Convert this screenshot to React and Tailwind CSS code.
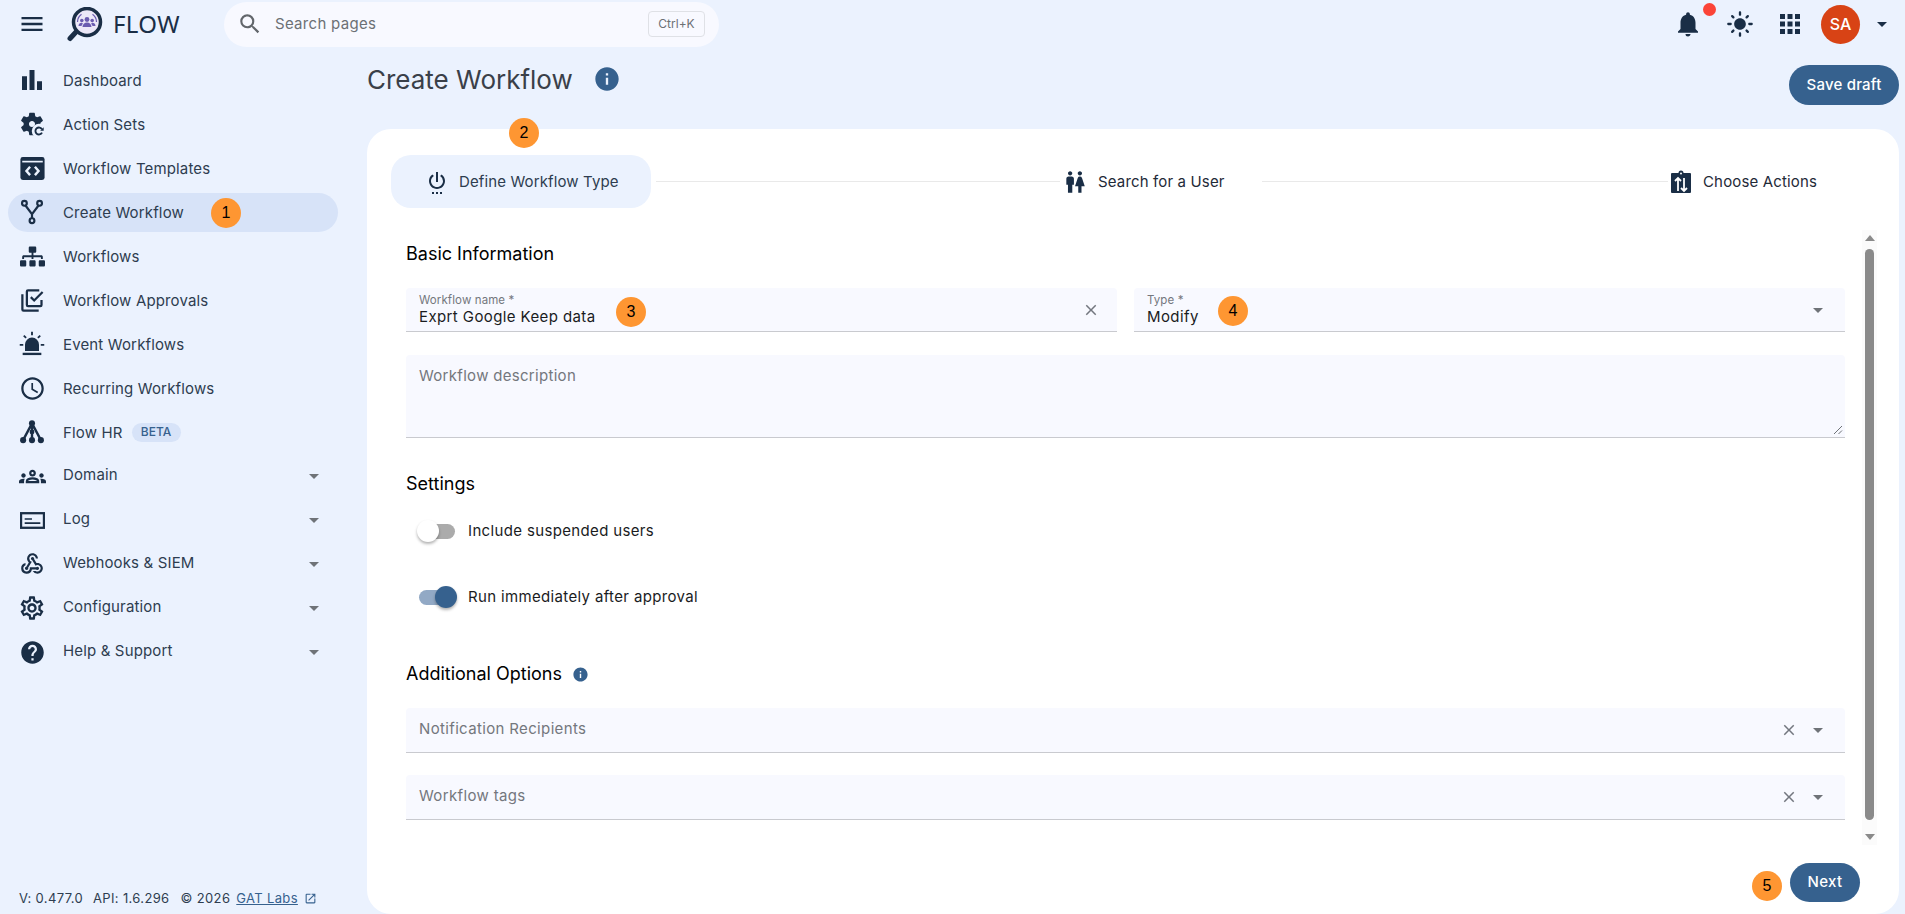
import React from "react";
import {
  MdMenu,
  MdSearch,
  MdNotifications,
  MdLightMode,
  MdApps,
  MdInfo,
  MdArrowDropDown,
  MdOutlineSchedule,
  MdOutlineGroups,
  MdWebhook,
  MdOutlineSettings,
  MdHelp,
  MdSettingsPower,
  MdWc,
  MdClose,
  MdOpenInNew,
} from "react-icons/md";
import { FaSitemap } from "react-icons/fa";

const navy = "#1a2e46";

function BarsIcon() {
  return (
    <svg viewBox="0 0 24 24" width="30" height="30" fill={navy}>
      <path d="M4 9h4v11H4zm12 4h4v7h-4zm-6-9h4v16h-4z" />
    </svg>
  );
}

function ActionSetsIcon() {
  return (
    <svg viewBox="0 0 24 24" width="28" height="28" fill={navy}>
      <path d="M19.14 12.94c.04-.3.06-.61.06-.94 0-.32-.02-.64-.07-.94l2.03-1.58c.18-.14.23-.41.12-.61l-1.92-3.32c-.12-.22-.37-.29-.59-.22l-2.39.96c-.5-.38-1.03-.7-1.62-.94l-.36-2.54c-.04-.24-.24-.41-.48-.41h-3.84c-.24 0-.43.17-.47.41l-.36 2.54c-.59.24-1.13.57-1.62.94l-2.39-.96c-.22-.08-.47 0-.59.22L2.74 8.87c-.12.21-.08.47.12.61l2.03 1.58c-.05.3-.09.63-.09.94s.02.64.07.94l-2.03 1.58c-.18.14-.23.41-.12.61l1.92 3.32c.12.22.37.29.59.22l2.39-.96c.5.38 1.03.7 1.62.94l.36 2.54c.05.24.24.41.48.41h3.84c.24 0 .44-.17.47-.41l.36-2.54c.59-.24 1.13-.56 1.62-.94l2.39.96c.22.08.47 0 .59-.22l1.92-3.32c.12-.22.07-.47-.12-.61l-2.01-1.58zM12 14.6c-1.43 0-2.6-1.17-2.6-2.6s1.17-2.6 2.6-2.6 2.6 1.17 2.6 2.6-1.17 2.6-2.6 2.6z" />
      <circle cx="18" cy="18" r="6.2" fill="#ebf2fe" />
      <path d="M20.6 19.4a3 3 0 1 1 0-2.8" fill="none" stroke={navy} strokeWidth="1.6" />
      <path d="M22 14.8v3h-3z" />
    </svg>
  );
}

function TemplatesIcon() {
  return (
    <svg viewBox="0 0 24 24" width="29" height="29">
      <rect x="2" y="2.500" width="20" height="19" rx="2" fill={navy} />
      <rect x="3.500" y="5.600" width="17" height="1.400" fill="#ebf2fe" />
      <path d="M10 10.500l-3 3.500 3 3.500M14 10.500l3 3.500-3 3.500" fill="none" stroke="#ebf2fe" strokeWidth="2" />
    </svg>
  );
}

function ForkIcon() {
  return (
    <svg viewBox="0 0 24 24" width="26" height="26" fill="none" stroke={navy} strokeWidth="2">
      <circle cx="5" cy="4" r="2.200" />
      <circle cx="19" cy="4" r="2.200" />
      <circle cx="12" cy="20" r="2.200" />
      <path d="M6 6l6 8 6-8M12 14v3.800" />
    </svg>
  );
}

function ApprovalsIcon() {
  return (
    <svg viewBox="0 0 24 24" width="27" height="27" fill="none" stroke={navy} strokeWidth="2">
      <path d="M3 6.500V20a1 1 0 0 0 1 1h13.500" />
      <path d="M20 11.500V16a1 1 0 0 1-1 1H8a1 1 0 0 1-1-1V4a1 1 0 0 1 1-1h10" />
      <path d="M10.500 9l3 3 7.500-7.500" />
    </svg>
  );
}

function SirenIcon() {
  return (
    <svg viewBox="0 0 24 24" width="28" height="28" fill={navy}>
      <path d="M6 18v-5.500a6 6 0 0 1 12 0V18z" />
      <rect x="4" y="19.500" width="16" height="2" />
      <path d="M11.200 1.500h1.600v3h-1.600zM1.500 12h3v1.600h-3zM19.500 12h3v1.600h-3zM4.400 5.300l1.100-1.100 2 2-1.100 1.100zM18.500 4.200l1.100 1.100-2 2-1.100-1.100z" />
    </svg>
  );
}

function NodesIcon() {
  return (
    <svg viewBox="0 0 24 24" width="26" height="26" fill={navy}>
      <circle cx="12" cy="4" r="2.800" />
      <circle cx="3.800" cy="19.500" r="2.800" />
      <circle cx="12" cy="19.500" r="2.800" />
      <circle cx="20.200" cy="19.500" r="2.800" />
      <circle cx="12" cy="12" r="2.200" />
      <path d="M12 4L3.800 19.500M12 4l8.200 15.500M12 4v15.500" fill="none" stroke={navy} strokeWidth="2.200" />
    </svg>
  );
}

function LogIcon() {
  return (
    <svg viewBox="0 0 24 24" width="25" height="25" fill="none" stroke={navy}>
      <rect x="1" y="5" width="22" height="14" strokeWidth="2.200" />
      <path d="M4.500 10.500h7M4.500 14.500h15" strokeWidth="1.500" />
    </svg>
  );
}

function ClipArrowsIcon() {
  return (
    <svg viewBox="0 0 24 24" width="24" height="24">
      <path d="M3 3h6.500a2.500 2.500 0 0 1 5 0H21a1 1 0 0 1 1 1v18a1 1 0 0 1-1 1H3a1 1 0 0 1-1-1V4a1 1 0 0 1 1-1z" fill={navy} />
      <circle cx="12" cy="3.500" r="1" fill="#fff" />
      <path d="M9 21V8M6 11l3-3 3 3M15 8v13M12 18l3 3 3-3" fill="none" stroke="#fff" strokeWidth="1.800" />
    </svg>
  );
}

function Logo() {
  return (
    <svg viewBox="0 0 36 36" width="36" height="36">
      <path d="M9 25L3 31.500" stroke={navy} strokeWidth="5" strokeLinecap="round" />
      <circle cx="20" cy="15" r="13.500" fill="#ece8f8" stroke={navy} strokeWidth="3.500" />
      <g fill="#6b5cb0">
        <circle cx="20" cy="12.500" r="2.400" />
        <circle cx="14.800" cy="13.500" r="1.800" />
        <circle cx="25.200" cy="13.500" r="1.800" />
        <path d="M15.500 20a4.500 4.500 0 0 1 9 0zM11.500 19a3.400 3.400 0 0 1 3.400-3.200l1 .8-1.500 2.400zM28.500 19a3.400 3.400 0 0 0-3.400-3.200l-1 .8 1.500 2.400z" />
      </g>
      <path d="M10.500 15a9.500 9.500 0 0 1 4-7.700M29.500 15a9.500 9.500 0 0 0-4-7.700" fill="none" stroke="#6b5cb0" strokeWidth="1.200" />
    </svg>
  );
}

const navItems = [
  { label: "Dashboard", icon: <BarsIcon /> },
  { label: "Action Sets", icon: <ActionSetsIcon /> },
  { label: "Workflow Templates", icon: <TemplatesIcon /> },
  { label: "Create Workflow", icon: <ForkIcon />, active: true },
  { label: "Workflows", icon: <FaSitemap size={25} color={navy} /> },
  { label: "Workflow Approvals", icon: <ApprovalsIcon /> },
  { label: "Event Workflows", icon: <SirenIcon /> },
  { label: "Recurring Workflows", icon: <MdOutlineSchedule size={27} color={navy} /> },
  { label: "Flow HR", icon: <NodesIcon />, beta: true },
  { label: "Domain", icon: <MdOutlineGroups size={27} color={navy} />, caret: true },
  { label: "Log", icon: <LogIcon />, caret: true },
  { label: "Webhooks & SIEM", icon: <MdWebhook size={26} color={navy} />, caret: true },
  { label: "Configuration", icon: <MdOutlineSettings size={28} color={navy} />, caret: true },
  { label: "Help & Support", icon: <MdHelp size={27} color={navy} />, caret: true },
];

function NavItem({ item }) {
  return (
    <div className="h-[44px] flex items-center">
      <div
        className={`h-[39px] w-[330px] ml-[8px] rounded-full flex items-center ${
          item.active ? "bg-[#d7e3f8]" : ""
        }`}
      >
        <span className="w-[48px] flex justify-center">{item.icon}</span>
        <span
          className={`ml-[7px] text-[15px] text-[#2e3d50] tracking-[0.15px] ${item.caret ? "mb-[2px]" : "mt-[2px]"}`}
        >
          {item.label}
        </span>
        {item.beta && (
          <span className="ml-[9px] h-[19px] w-[49px] rounded-full bg-[#d7e3f8] text-[#36618e] text-[12px] font-medium flex items-center justify-center">
            BETA
          </span>
        )}
        {item.caret && (
          <span className="ml-auto mr-[12px] text-[#6f7378]">
            <MdArrowDropDown size={24} />
          </span>
        )}
      </div>
    </div>
  );
}

function Field({ label, value, placeholder, heightClass, clear, caret, small }) {
  return (
    <div
      className={`relative bg-[#f8f9ff] border-b border-[#c9cacf] rounded-t-[4px] flex items-center pl-[13px] ${heightClass}`}
    >
      <div className={`flex-1 ${placeholder ? "pb-[2px]" : ""}`}>
        {small && <div className="text-[11.5px] leading-[14px] text-[#74777d] tracking-[0.1px]">{label}</div>}
        {value && <div className="text-[15px] leading-[20px] text-[#1a1c1e] tracking-[0.4px]">{value}</div>}
        {placeholder && <div className="text-[15px] leading-[20px] text-[#74777d] tracking-[0.35px]">{placeholder}</div>}
      </div>
      {clear && (
        <span className={`text-[#73777f] ${caret ? "mr-[8px]" : "mr-[17px]"}`}>
          <MdClose size={18} />
        </span>
      )}
      {caret && (
        <span className="mr-[15px] text-[#6f7378]">
          <MdArrowDropDown size={24} />
        </span>
      )}
    </div>
  );
}

function Toggle({ on, label }) {
  return (
    <div className="h-[30px] flex items-center pl-[13px]">
      <div className={`relative w-[36px] h-[15px] rounded-full ${on ? "bg-[#92a9c5]" : "bg-[#ababab]"}`}>
        <span
          className={`absolute top-[-4px] w-[22px] h-[22px] rounded-full shadow-[0_2px_3px_rgba(0,0,0,0.3)] ${
            on ? "left-[16px] bg-[#36618e]" : "left-[-2px] bg-white"
          }`}
        />
      </div>
      <span className="ml-[13px] text-[15px] text-[#1a1c1e] tracking-[0.35px]">{label}</span>
    </div>
  );
}

function Badge({ n, className }) {
  return (
    <span
      className={`absolute w-[30px] h-[30px] rounded-full bg-[#fe9632] text-black text-[16px] flex items-center justify-center font-['Liberation_Sans',sans-serif] ${className}`}
    >
      {n}
    </span>
  );
}

export default function App() {
  return (
    <div className="relative w-[1905px] h-[914px] overflow-hidden bg-[#ebf2fe] flex flex-col font-['Inter',sans-serif]">
      <header className="h-[48px] shrink-0 flex items-center">
        <span className="ml-[18px] w-[28px]">
          <MdMenu size={28} color={navy} />
        </span>
        <span className="ml-[21px] mt-[2px]">
          <Logo />
        </span>
        <span className="ml-[10px] text-[24px] text-[#1a2e46] tracking-[0.4px] font-['Noto_Sans',sans-serif] leading-none">
          FLOW
        </span>
        <div className="ml-[44px] w-[495px] h-[45px] rounded-full bg-[#f8f9ff] flex items-center">
          <span className="ml-[13px] text-[#62666b]">
            <MdSearch size={26} />
          </span>
          <span className="ml-[12px] text-[15px] text-[#6c7075] tracking-[0.3px]">Search pages</span>
          <span className="ml-auto mr-[14px] w-[57px] h-[26px] rounded-[4px] border border-[#dfe1e6] text-[12px] text-[#6c7075] flex items-center justify-center">
            Ctrl+K
          </span>
        </div>
        <div className="ml-auto flex items-center">
          <span className="relative">
            <MdNotifications size={30} color={navy} />
            <span className="absolute left-[30px] top-[-6px] w-[13px] h-[13px] rounded-full bg-[#fb4438]" />
          </span>
          <span className="ml-[23px]">
            <MdLightMode size={28} color={navy} />
          </span>
          <span className="ml-[21px]">
            <MdApps size={30} color={navy} />
          </span>
          <span className="ml-[16px] w-[39px] h-[39px] rounded-full bg-[#d84315] text-white text-[16px] font-medium flex items-center justify-center">
            SA
          </span>
          <span className="ml-[10px] mr-[11px]">
            <MdArrowDropDown size={24} color={navy} />
          </span>
        </div>
      </header>

      <div className="flex-1 flex min-h-0">
        <aside className="w-[367px] shrink-0 flex flex-col pt-[10px] pb-[6px]">
          {navItems.map((item) => (
            <NavItem key={item.label} item={item} />
          ))}
          <div className="mt-auto ml-[19px] flex items-center text-[13px] text-[#2e3d50] tracking-[0.35px]">
            <span>V: 0.477.0</span>
            <span className="ml-[10px]">API: 1.6.296</span>
            <span className="ml-[11px]">© 2026</span>
            <span className="ml-[6px] underline text-[#36618e]">GAT Labs</span>
            <span className="ml-[6px] text-[#36618e]">
              <MdOpenInNew size={13} />
            </span>
          </div>
        </aside>

        <main className="flex-1 flex flex-col pr-[6px] min-w-0">
          <div className="h-[81px] shrink-0 flex items-start">
            <h1 className="mt-[16px] h-[32px] text-[26px] leading-[32px] text-[#3a4049]">Create Workflow</h1>
            <span className="mt-[17px] ml-[20px] text-[#36618e]">
              <MdInfo size={28} />
            </span>
            <button className="ml-auto mt-[17px] w-[110px] h-[40px] rounded-full bg-[#36618e] text-white text-[15px] tracking-[0.2px] font-medium">
              Save draft
            </button>
          </div>

          <section className="flex-1 bg-white rounded-[24px] pt-[26px] flex flex-col min-h-0">
            <div className="flex items-center pl-[24px] shrink-0">
              <div className="w-[260px] h-[53px] rounded-[20px] bg-[#ebf2fe] flex items-center pl-[34px]">
                <MdSettingsPower size={24} color={navy} />
                <span className="ml-[10px] mt-[1px] text-[15px] text-[#2e3d50] tracking-[0.12px]">Define Workflow Type</span>
              </div>
              <div className="ml-[5px] w-[404px] h-[1.5px] bg-[#e9e9e9]" />
              <div className="flex items-center pl-[2px] w-[202px]">
                <MdWc size={26} color={navy} />
                <span className="ml-[10px] mt-[2px] text-[15px] text-[#1f2a38] tracking-[0.15px]">Search for a User</span>
              </div>
              <div className="w-[406px] h-[1.5px] bg-[#e9e9e9]" />
              <div className="flex items-center pl-[1px]">
                <ClipArrowsIcon />
                <span className="ml-[10px] mt-[2px] text-[15px] text-[#1f2a38] tracking-[0.15px]">Choose Actions</span>
              </div>
            </div>

            <div className="mt-[22px] flex shrink-0">
              <div className="ml-[39px] w-[1439px]">
                <h2 className="mt-[12px] h-[24px] text-[18px] leading-[24px] text-black">Basic Information</h2>
                <div className="mt-[22px] flex gap-[17px]">
                  <div className="w-[711px]">
                    <Field small label="Workflow name *" value="Exprt Google Keep data" heightClass="h-[44px]" clear />
                  </div>
                  <div className="w-[711px]">
                    <Field small label="Type *" value="Modify" heightClass="h-[44px]" caret />
                  </div>
                </div>
                <div className="mt-[23px] relative h-[83px] bg-[#f8f9ff] border-b border-[#c9cacf] rounded-t-[4px] pl-[13px] pt-[11px] text-[15px] leading-[20px] text-[#74777d] tracking-[0.3px]">
                  Workflow description
                  <svg viewBox="0 0 10 10" width="10" height="10" className="absolute right-[2px] bottom-[2px]" stroke="#6f7378" fill="none">
                    <path d="M1 9l8-8M5.500 9L9 5.500" />
                  </svg>
                </div>
                <h2 className="mt-[34px] h-[24px] text-[18px] leading-[24px] text-black">Settings</h2>
                <div className="mt-[20px]">
                  <Toggle label="Include suspended users" />
                </div>
                <div className="mt-[36px]">
                  <Toggle on label="Run immediately after approval" />
                </div>
                <h2 className="mt-[50px] h-[24px] text-[18px] leading-[24px] text-black flex items-center">
                  Additional Options
                  <span className="ml-[10px] text-[#36618e]">
                    <MdInfo size={17} />
                  </span>
                </h2>
                <div className="mt-[22px]">
                  <Field placeholder="Notification Recipients" heightClass="h-[45px]" clear caret />
                </div>
                <div className="mt-[22px]">
                  <Field placeholder="Workflow tags" heightClass="h-[45px]" clear caret />
                </div>
              </div>

              <div className="ml-[17px] w-[15px] h-[615px] bg-[#fbfbfb] flex flex-col items-center">
                <span className="mt-[5px] w-0 h-0 border-x-[5px] border-x-transparent border-b-[6px] border-b-[#8a8a8a]" />
                <span className="mt-[8px] w-[9px] h-[571px] rounded-full bg-[#8a8a8a]" />
                <span className="mt-[14px] w-0 h-0 border-x-[5px] border-x-transparent border-t-[6px] border-t-[#8a8a8a]" />
              </div>
            </div>

            <div className="mt-[18px] flex justify-end pr-[39px] shrink-0">
              <button className="w-[70px] h-[39px] rounded-full bg-[#36618e] text-white text-[15px] tracking-[0.3px] font-medium">
                Next
              </button>
            </div>
          </section>
        </main>
      </div>

      <Badge n="1" className="left-[211px] top-[198px]" />
      <Badge n="2" className="left-[509px] top-[118px]" />
      <Badge n="3" className="left-[616px] top-[297px]" />
      <Badge n="4" className="left-[1218px] top-[296px]" />
      <Badge n="5" className="left-[1752px] top-[871px]" />
    </div>
  );
}
